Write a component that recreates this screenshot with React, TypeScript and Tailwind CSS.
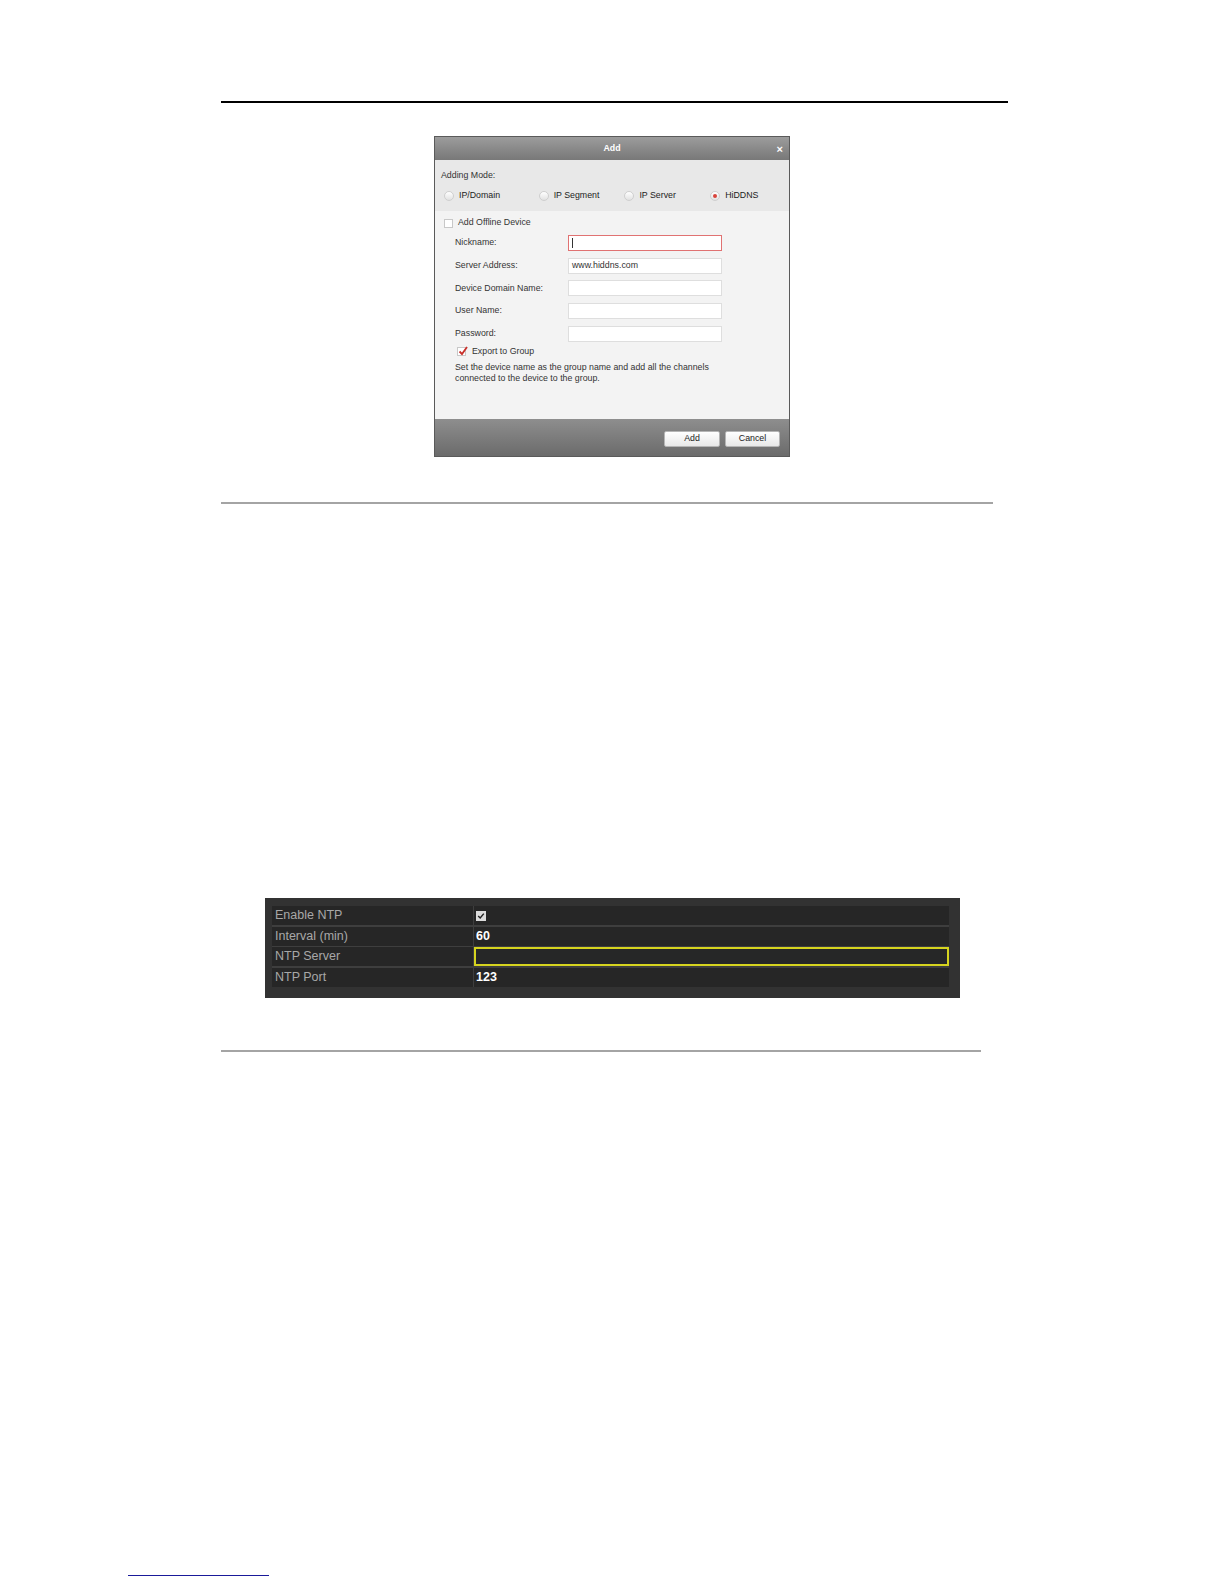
import { useState } from "react"

const fieldRows = [
  { label: "Nickname:", value: "", active: true },
  { label: "Server Address:", value: "www.hiddns.com" },
  { label: "Device Domain Name:", value: "" },
  { label: "User Name:", value: "" },
  { label: "Password:", value: "" },
]

const modes = [
  { name: "IP/Domain", w: "w-[96px]" },
  { name: "IP Segment", w: "w-[87px]" },
  { name: "IP Server", w: "w-[87px]" },
  { name: "HiDDNS", w: "w-[80px]" },
]

const Radio = ({ on }: { on: boolean }) => (
  <span className="w-[10px] h-[10px] rounded-full border border-[#cfcfcf] bg-gradient-to-b from-white to-[#e2e2e2] flex items-center justify-center">
    {on && <span className="w-[4px] h-[4px] rounded-full bg-[#d9443c]" />}
  </span>
)

const AddDialog = () => {
  const [mode] = useState(3)

  return (
    <div className="w-[356px] h-[321px] ml-[434px] mt-[33px] border border-[#5a5a5a] flex flex-col text-[8.8px] text-[#333] font-['Liberation_Sans',Arial,sans-serif]">
      <div className="h-[23px] bg-gradient-to-b from-[#9c9c9c] to-[#787878] flex items-center justify-center relative text-white font-bold">
        Add
        <span className="absolute right-[6px] top-[4px] text-[11px]">×</span>
      </div>

      <div className="h-[51px] bg-[#e8e8e8] pl-[6px] pt-[10px]">
        <div className="leading-[11px]">Adding Mode:</div>
        <div className="flex mt-[8px] pl-[3px]">
          {modes.map((m, i) => (
            <div key={m.name} className={`flex items-center gap-[5px] ${m.w}`}>
              <Radio on={i === mode} />
              <span className="text-[#222]">{m.name}</span>
            </div>
          ))}
        </div>
      </div>

      <div className="flex-1 bg-[#f3f3f3] pl-[9px] pt-[7px]">
        <div className="flex items-center gap-[5px] h-[10px]">
          <span className="w-[9px] h-[9px] border border-[#c8c8c8] bg-white" />
          <span>Add Offline Device</span>
        </div>
        <div className="pl-[11px] mt-[7px] flex flex-col gap-[6.7px]">
          {fieldRows.map((f) => (
            <div key={f.label} className="flex items-center">
              <span className="w-[113px]">{f.label}</span>
              <div
                className={
                  f.active
                    ? "w-[154px] h-[16px] border border-[#e07272] bg-white flex items-center pl-[3px]"
                    : "w-[154px] h-[16px] border border-[#dedede] bg-white flex items-center pl-[3px]"
                }
              >
                {f.active ? <span className="w-px h-[10px] bg-[#333]" /> : f.value}
              </div>
            </div>
          ))}
        </div>
        <div className="flex items-center gap-[6px] pl-[13px] mt-[5px] h-[10px]">
          <span className="w-[9px] h-[9px] border border-[#c8c8c8] bg-white relative">
            <svg viewBox="0 0 10 10" className="absolute -top-[2px] left-0 w-[10px] h-[10px]">
              <path d="M1.5 5.5 L4 8 L9 1" fill="none" stroke="#c8302a" strokeWidth="1.8" />
            </svg>
          </span>
          <span>Export to Group</span>
        </div>
        <div className="pl-[11px] mt-[5px] leading-[11.5px]">
          Set the device name as the group name and add all the channels
          <br />
          connected to the device to the group.
        </div>
      </div>

      <div className="h-[37px] bg-gradient-to-b from-[#8e8e8e] to-[#6b6b6b] flex items-center justify-end gap-[5px] pr-[9px] pt-[2px]">
        <button className="w-[56px] h-[16px] rounded-[2px] bg-gradient-to-b from-white to-[#e8e8e8] border border-[#b5b5b5] text-[#222]">Add</button>
        <button className="w-[55px] h-[16px] rounded-[2px] bg-gradient-to-b from-white to-[#e8e8e8] border border-[#b5b5b5] text-[#222]">Cancel</button>
      </div>
    </div>
  )
}

const ntpRows = [
  { label: "Enable NTP", kind: "check" },
  { label: "Interval (min)", kind: "text", value: "60" },
  { label: "NTP Server", kind: "focus" },
  { label: "NTP Port", kind: "text", value: "123" },
]

const NtpPanel = () => (
  <div className="w-[695px] h-[100px] ml-[265px] mt-[394px] bg-[#323232] pl-[7px] pr-[11px] pt-[8px] font-['Liberation_Sans',Arial,sans-serif] text-[12.5px]">
    <div className="bg-[#3e3e3e] flex flex-col gap-[1.5px] rounded-[2px]">
      {ntpRows.map((r) => (
        <div key={r.label} className="flex h-[19px] gap-[1px]">
          <div className="w-[201px] bg-[#262626] pl-[3px] flex items-center text-[#a8a8a8]">{r.label}</div>
          <div
            className={
              r.kind === "focus"
                ? "flex-1 bg-[#262727] border-2 border-[#d6d41f] flex items-center"
                : "flex-1 bg-[#262626] pl-[2px] flex items-center text-white font-bold"
            }
          >
            {r.kind === "check" && (
              <span className="w-[10px] h-[10px] bg-[#dcdcdc] flex items-center justify-center">
                <svg viewBox="0 0 10 10" className="w-[8px] h-[8px]">
                  <path d="M1.5 5 L4 7.5 L8.5 2" fill="none" stroke="#222" strokeWidth="1.8" />
                </svg>
              </span>
            )}
            {r.kind === "text" && r.value}
          </div>
        </div>
      ))}
    </div>
  </div>
)

export default function App() {
  return (
    <div className="w-[1224px] h-[1584px] bg-white flex flex-col overflow-hidden">
      <div className="ml-[221px] mt-[101px] w-[787px] h-[2px] bg-black" />
      <AddDialog />
      <div className="ml-[221px] mt-[45px] w-[772px] h-[2px] bg-[#a4a4a4]" />
      <NtpPanel />
      <div className="ml-[221px] mt-[52px] w-[760px] h-[2px] bg-[#a4a4a4]" />
      <div className="ml-[128px] mt-[523px] w-[141px] h-px bg-[#1a1a9a]" />
    </div>
  )
}
